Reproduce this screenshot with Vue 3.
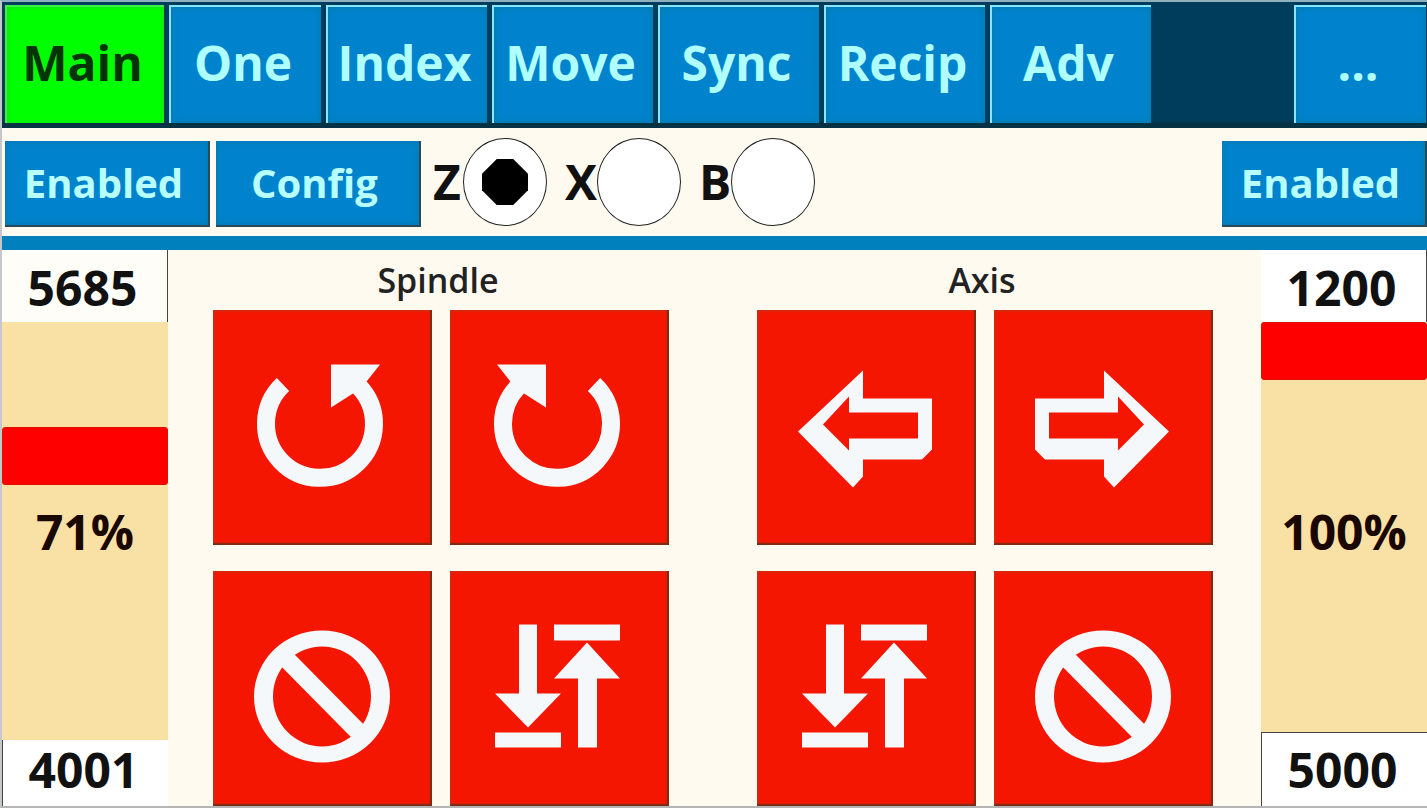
<template>
  <div class="panel">
    <nav class="tabs">
      <button
        v-for="tab in tabs"
        :key="tab"
        type="button"
        class="tab"
        :class="{ active: tab === activeTab, more: tab === '...' }"
        @click="activeTab = tab"
      >
        {{ tab }}
      </button>
    </nav>

    <div class="toolbar">
      <button type="button" class="tool-btn">Enabled</button>
      <button type="button" class="tool-btn">Config</button>
      <div class="axis-select">
        <label v-for="a in axes" :key="a" :for="'axis' + a">
          <span>{{ a }}</span>
          <input :id="'axis' + a" v-model="axis" type="radio" name="axis" :value="a" />
        </label>
      </div>
      <button type="button" class="tool-btn right">Enabled</button>
    </div>

    <main class="body">
      <!-- Spindle speed -->
      <section class="gauge left">
        <div class="value top">5685</div>
        <input
          id="spindleSpeed"
          v-model.number="spindle"
          type="range"
          min="1"
          max="100"
        />
        <label for="spindleSpeed" class="percent">{{ spindle }}%</label>
        <div class="value bottom">4001</div>
      </section>

      <div class="groups">
        <section v-for="group in groups" :key="group.title" class="group">
          <h2>{{ group.title }}</h2>
          <div class="pads">
            <button v-for="icon in group.icons" :key="icon" type="button" class="pad">
              <svg viewBox="0 0 219 234">
                <g v-if="icon === 'ccw' || icon === 'cw'" :transform="icon === 'cw' ? 'translate(214 0) scale(-1 1)' : null">
                  <path d="M70 74A54 54 0 1 0 146 76" class="ring" />
                  <path d="M118 54H167L152 73L140 83L118 97Z" />
                </g>
                <g v-else-if="icon === 'left' || icon === 'right'" :transform="icon === 'right' ? 'translate(216 0) scale(-1 1)' : null">
                  <path
                    fill-rule="evenodd"
                    d="M41 121L106 60V88H175V139L165 149H106V166L96 177ZM66 114L92 140V128H161V102H92V86Z"
                  />
                </g>
                <g v-else-if="icon === 'stop'">
                  <path
                    fill-rule="evenodd"
                    d="M41 125a68 66 0 1 0 136 0a68 66 0 1 0 -136 0ZM60 125a49 50 0 1 1 98 0a49 50 0 1 1 -98 0Z"
                  />
                  <path d="M70 84L149 164" class="bar" />
                </g>
                <g v-else>
                  <path d="M69 53H87V122H111L78 156L45 122H69Z" />
                  <path d="M45 161H111V176H45ZM104 53H170V69H104Z" />
                  <path d="M137 71L170 107H147V176H128V107H104Z" />
                </g>
              </svg>
            </button>
          </div>
        </section>
      </div>

      <!-- Axis feed -->
      <section class="gauge right">
        <div class="value top">1200</div>
        <input
          id="axisFeed"
          v-model.number="feed"
          type="range"
          min="1"
          max="100"
        />
        <label for="axisFeed" class="percent">{{ feed }}%</label>
        <div class="value bottom">5000</div>
      </section>
    </main>
  </div>
</template>

<script setup>
import { ref } from "vue";

const tabs = ["Main", "One", "Index", "Move", "Sync", "Recip", "Adv", "..."];
const activeTab = ref("Main");

const axes = ["Z", "X", "B"];
const axis = ref("Z");

const spindle = ref(71);
const feed = ref(100);

const groups = [
  { title: "Spindle", icons: ["ccw", "cw", "stop", "limits"] },
  { title: "Axis", icons: ["left", "right", "limits", "stop"] },
];
</script>

<style>
body {
  margin: 0;
}
</style>

<style scoped>
.panel {
  display: flex;
  flex-direction: column;
  box-sizing: border-box;
  min-height: 100vh;
  border-top: 2px solid #8fb0bd;
  border-left: 2px solid #c4c8cc;
  border-bottom: 2px solid #b5b5b5;
  background: #fffaf0;
  font-family: "Open Sans", "Noto Sans", sans-serif;
  color: #111;
}
button {
  margin: 0;
  padding: 0;
  border: 0;
  font-family: inherit;
  cursor: pointer;
}

/* Tabs */
.tabs {
  display: grid;
  grid-template-columns: 159fr 152fr repeat(5, 161fr) 133fr 132fr;
  gap: 5px;
  height: 118px;
  padding: 3px 1px 5px 3px;
  background: linear-gradient(#003c5c 118px, #063243 122px);
}
.tab {
  padding: 0 6px 4px 0;
  border-top: 2px solid #8ce4f8;
  border-left: 2px solid #8ce4f8;
  background: #0083cc;
  box-shadow: inset 0 0 6px 1px #007cae;
  color: #b0ffff;
  font-size: 48px;
  font-weight: 700;
  line-height: 60px;
}
.tab.active {
  border-color: #3cf04c;
  background: #00ff00;
  box-shadow: inset 0 0 5px #1ed81e;
  color: #043404;
}
.tab.more {
  grid-column: 9;
}

/* Toolbar */
.toolbar {
  display: flex;
  align-items: center;
  gap: 6px;
  height: 108px;
  padding: 0 0 0 3px;
  border-bottom: 14px solid #0080bc;
}
.tool-btn {
  width: 205px;
  height: 86px;
  margin-top: 4px;
  padding-right: 6px;
  border-right: 2px solid #2a4a5c;
  border-bottom: 2px solid #2a4a5c;
  background: #0083cc;
  box-shadow: inset 0 0 6px 1px #0079b0;
  color: #b8ffff;
  font-size: 40px;
  font-weight: 700;
  line-height: 60px;
}
.tool-btn.right {
  margin-left: auto;
}
.axis-select {
  display: flex;
  gap: 18px;
  margin-left: 4px;
}
.axis-select label {
  display: flex;
  align-items: center;
  font-size: 48px;
  font-weight: 700;
  line-height: 60px;
}
.axis-select span {
  width: 32px;
  text-align: center;
}
.axis-select input {
  appearance: none;
  display: grid;
  place-items: center;
  box-sizing: border-box;
  width: 84px;
  height: 88px;
  margin: 0;
  border: 1px solid #222;
  border-radius: 50%;
  background: #fff;
}
.axis-select input:checked::before {
  content: "";
  width: 46px;
  height: 46px;
  background: #000;
  clip-path: polygon(32% 0, 68% 0, 100% 32%, 100% 68%, 68% 100%, 32% 100%, 0 68%, 0 32%);
}

/* Gauges */
.body {
  display: flex;
  flex: 1;
}
.gauge {
  position: relative;
  display: flex;
  flex-direction: column;
  width: 166px;
}
.value {
  box-sizing: border-box;
  padding-right: 4px;
  background: #fff;
  font-size: 48px;
  font-weight: 700;
  line-height: 60px;
  text-align: center;
}
.value.top {
  height: 72px;
  padding-top: 8px;
  border-right: 1px solid #444;
}
.left .value.top {
  background: #fffdf8;
}
.value.bottom {
  height: 66px;
  border-left: 1px solid #444;
}
.right .value.bottom {
  height: 74px;
  padding-top: 7px;
  border-top: 1px solid #444;
}
.gauge input {
  appearance: none;
  flex: 1;
  width: 100%;
  min-height: 200px;
  margin: 0;
  background: #f9e1a6;
  writing-mode: vertical-lr;
  direction: rtl;
}
.gauge input::-webkit-slider-thumb {
  appearance: none;
  width: 166px;
  height: 58px;
  border: 1px solid #e01000;
  border-radius: 3px;
  box-sizing: border-box;
  background: #ff0000;
}
.percent {
  position: absolute;
  top: 50%;
  left: 0;
  right: 0;
  margin-top: -26px;
  color: #1a0800;
  font-size: 48px;
  font-weight: 700;
  line-height: 60px;
  text-align: center;
  pointer-events: none;
}

/* Button groups */
.groups {
  display: flex;
  flex: 1;
  gap: 88px;
  padding: 0 48px 0 45px;
}
.group {
  display: flex;
  flex: 1;
  flex-direction: column;
}
.group h2 {
  margin: 0;
  padding-right: 6px;
  color: #222;
  font-size: 34px;
  font-weight: 600;
  line-height: 60px;
  text-align: center;
}
.pads {
  display: grid;
  flex: 1;
  grid-template-columns: 1fr 1fr;
  grid-template-rows: 1fr 1fr;
  gap: 26px 18px;
}
.pad {
  display: flex;
  box-sizing: border-box;
  background: #f41600;
  box-shadow: inset -2px -2px 1px #7a2c14, inset 0 0 3px 1px #c43418;
}
.pad svg {
  width: 100%;
  height: 100%;
  fill: #f4f8fa;
}
.pad .ring {
  fill: none;
  stroke: #f4f8fa;
  stroke-width: 18;
}
.pad .bar {
  stroke: #f4f8fa;
  stroke-width: 18;
}
</style>
